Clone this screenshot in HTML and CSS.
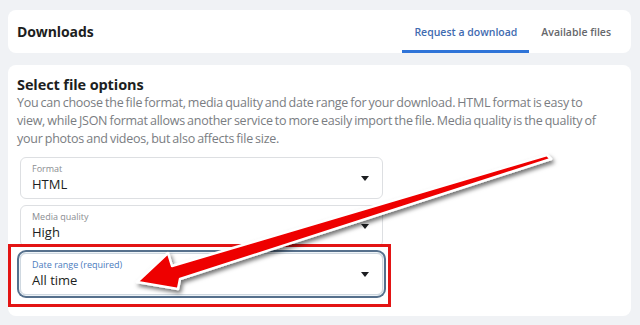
FILE: index.html
```html
<!DOCTYPE html>
<html lang="en">
<head>
    <meta charset="UTF-8">
    <meta name="viewport" content="width=device-width, initial-scale=1.0">
    <title>Downloads</title>
    <link rel="stylesheet" href="styles.css">
</head>
<body>
<div class="header-card">
    <h1 class="title">Downloads</h1>
    <div class="tabs">
        <span class="tab active">Request a download</span>
        <span class="tab">Available files</span>
    </div>
</div>

<div class="options-card">
    <h2 class="section-title">Select file options</h2>
    <p class="desc">You can choose the file format, media quality and date range for your download. HTML format is easy to<br>
        view, while JSON format allows another service to more easily import the file. Media quality is the quality of<br>
        your photos and videos, but also affects file size.</p>

    <div class="fields">
        <div class="field">
            <div class="field-text">
                <span class="field-label">Format</span>
                <span class="field-value">HTML</span>
            </div>
            <span class="caret"></span>
        </div>
        <div class="field">
            <div class="field-text">
                <span class="field-label">Media quality</span>
                <span class="field-value">High</span>
            </div>
            <span class="caret"></span>
        </div>
        <div class="field focused">
            <div class="field-text">
                <span class="field-label">Date range (required)</span>
                <span class="field-value">All time</span>
            </div>
            <span class="caret"></span>
            <div class="highlight"></div>
        </div>
    </div>
</div>

<!-- annotation arrow drawn over the page -->
<svg class="arrow" width="640" height="325" viewBox="0 0 640 325">
    <defs>
        <filter id="shadow" x="-10%" y="-10%" width="120%" height="130%">
            <feDropShadow dx="2" dy="3" stdDeviation="2" flood-color="#000" flood-opacity="0.55"/>
        </filter>
    </defs>
    <polygon filter="url(#shadow)" fill="#ee0000" stroke="#fff" stroke-width="2.5" stroke-linejoin="round"
        points="547,155 551,159 180,279 178,289 137,282 168,253 172,266"/>
</svg>
</body>
</html>
```

FILE: styles.css
```css
body {
    margin: 0;
    padding: 10px 9px 9px 8px;
    background-color: #f0f2f5;
    font-family: 'Open Sans', 'Noto Sans', sans-serif;
    color: #1c1e21;
    position: relative;
}

.header-card {
    height: 43px;
    background-color: #fff;
    border-radius: 8px;
    display: flex;
    align-items: stretch;
    justify-content: space-between;
    padding: 0 8px 0 9px;
}

.title {
    margin: 0;
    font-size: 14px;
    font-weight: 700;
    align-self: center;
    letter-spacing: -0.1px;
}

.tabs {
    display: flex;
}

.tab {
    display: flex;
    align-items: center;
    padding: 3px 12px 0;
    font-size: 10.5px;
    font-weight: 600;
    color: #65676b;
    border-bottom: 3px solid transparent;
}

.tab.active {
    color: #3f6bb0;
    border-bottom-color: #2f74d8;
}

.options-card {
    margin-top: 12px;
    height: 251px;
    box-sizing: border-box;
    background-color: #fff;
    border-radius: 8px;
    padding: 10px 9px 0;
}

.section-title {
    margin: 0;
    font-size: 14.5px;
    line-height: 19px;
    font-weight: 700;
    letter-spacing: -0.1px;
}

.desc {
    margin: 0;
    font-size: 12.5px;
    line-height: 18px;
    color: #7a7d82;
    letter-spacing: -0.25px;
    word-spacing: -0.8px;
    white-space: nowrap;
}

.fields {
    margin-top: 9px;
    padding-left: 3px;
    width: 363px;
    display: flex;
    flex-direction: column;
    gap: 6px;
}

.field {
    position: relative;
    height: 42px;
    box-sizing: border-box;
    border: 1px solid #dddfe2;
    border-radius: 6px;
    display: flex;
    align-items: center;
    justify-content: space-between;
    padding: 0 13px 0 11px;
}

.field-text {
    display: flex;
    flex-direction: column;
}

.field-label {
    font-size: 9px;
    line-height: 12px;
    color: #8a8d91;
}

.field-value {
    font-size: 13px;
    line-height: 18px;
    color: #1c1e21;
}

.caret {
    width: 0;
    height: 0;
    border-left: 4.5px solid transparent;
    border-right: 4.5px solid transparent;
    border-top: 5px solid #1c1e21;
}

.field.focused {
    border-color: #cfd8e0;
    box-shadow: 0 0 0 1px #eef3f7, 0 0 0 3px #56708c;
}

.field.focused .field-label {
    color: #4a7bbd;
}

.highlight {
    position: absolute;
    left: -13px;
    top: -10px;
    width: 377px;
    height: 57px;
    border: 3px solid #e31414;
}

.arrow {
    position: absolute;
    left: 0;
    top: 0;
    pointer-events: none;
}
```
